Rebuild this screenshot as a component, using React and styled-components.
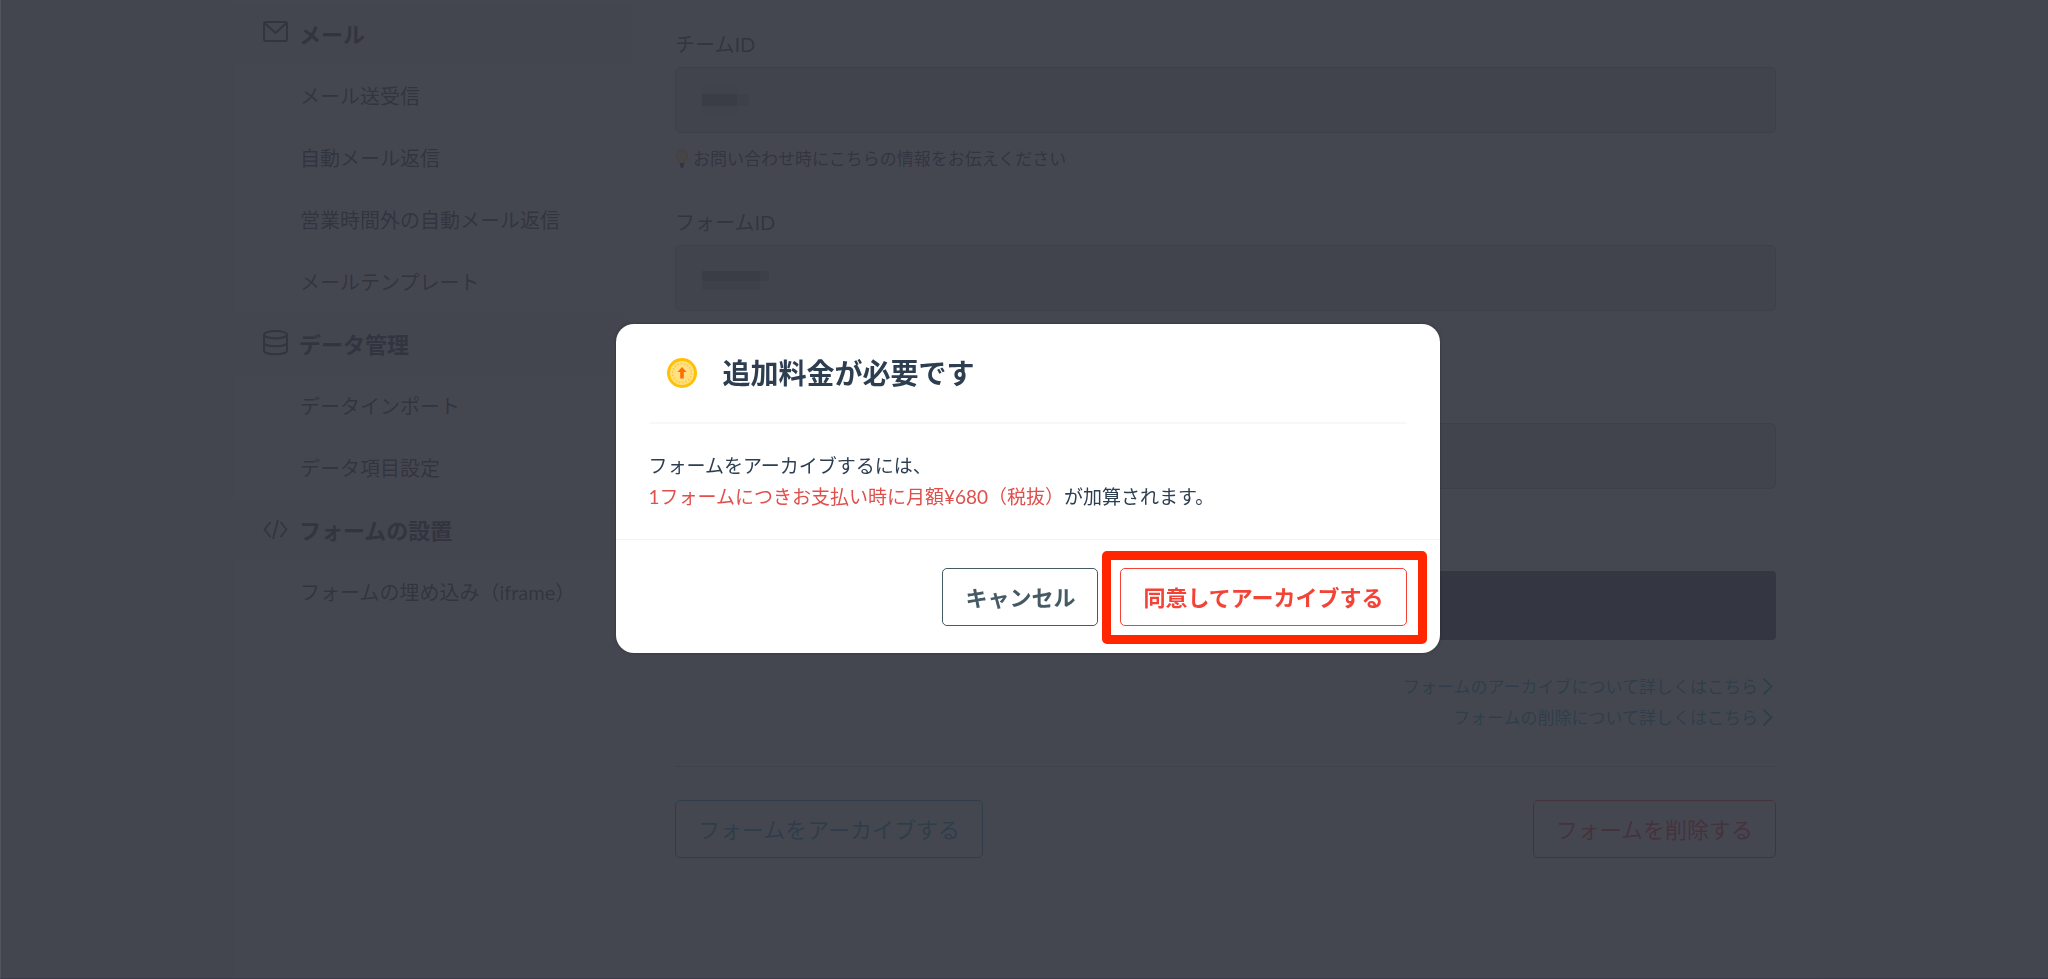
import styled, { createGlobalStyle } from "styled-components";

const GlobalStyle = createGlobalStyle`
  * {
    box-sizing: border-box;
  }
  body {
    margin: 0;
    overflow: hidden;
    background-color: #e2eaec;
    color: #2c3450;
    font-family: Lato, "Noto Sans CJK JP", sans-serif;
    font-size: 20px;
  }
  button,
  input {
    font-family: inherit;
  }
`;

const Page = styled.div`
  min-height: 100vh;
  padding: 0 227px 0 234px;
  display: flex;
`;

const Sidebar = styled.nav`
  flex: 0 0 397px;
  padding-top: 3px;
  background-color: white;
`;

const SectionTitle = styled.h2`
  height: 62px;
  margin: 0;
  padding: 0 0 2px 29px;
  display: flex;
  align-items: center;
  gap: 11px;
  background-color: #e2eaec;
  font-size: 22px;
  font-weight: 700;
`;

const MenuList = styled.ul`
  margin: 0;
  padding: 0;
  list-style: none;
`;

const MenuLink = styled.a`
  height: 62px;
  padding: 0 0 1px 66px;
  display: flex;
  align-items: center;
  color: inherit;
  text-decoration: none;
`;

const Main = styled.main`
  flex: 1;
  padding: 29px 45px 0 44px;
  background-color: white;
`;

const Field = styled.div`
  margin-bottom: ${(props) => props.$space}px;
`;

const Label = styled.label`
  display: block;
  margin-bottom: 8px;
  line-height: 30px;
`;

const InputBox = styled.div`
  position: relative;
`;

const Input = styled.input`
  display: block;
  width: 100%;
  height: 66px;
  padding: 0 26px;
  border: 1px solid #a4a0d0;
  border-radius: 5px;
  background-color: #d4d8dc;
  font-size: 20px;
`;

// masked id value
const Mask = styled.svg`
  position: absolute;
  top: 14px;
  left: 27px;
`;

const Help = styled.p`
  margin: 14px 0 0;
  display: flex;
  align-items: center;
  gap: 4px;
  font-size: 17px;
  line-height: 24px;
`;

const SaveButton = styled.button`
  display: block;
  width: 100%;
  height: 69px;
  border: none;
  border-radius: 4px;
  background-color: #484b68;
`;

const Links = styled.div`
  margin-top: 31px;
  padding-bottom: 33px;
  display: flex;
  flex-direction: column;
  align-items: flex-end;
  border-bottom: 1px solid #bcc2cc;
`;

const HelpLink = styled.a`
  display: flex;
  align-items: center;
  gap: 4px;
  padding-right: 3px;
  color: #089cb8;
  font-size: 17px;
  line-height: 31px;
  text-decoration: none;
`;

const Actions = styled.div`
  margin-top: 33px;
  display: flex;
  justify-content: space-between;
`;

const Button = styled.button`
  height: 58px;
  padding: 0 22px 3px;
  border: 1px solid ${(props) => props.$color};
  border-radius: 5px;
  background-color: transparent;
  color: ${(props) => props.$color};
  font-size: 22px;
  font-weight: ${(props) => (props.$bold ? 700 : 400)};
  white-space: nowrap;
`;

const Overlay = styled.div`
  position: fixed;
  inset: 0;
  padding: 0 0 1px 6px;
  display: flex;
  align-items: center;
  justify-content: center;
  border-left: 1px solid rgba(255, 255, 255, 0.08);
  border-bottom: 1px solid #393b47;
  background-color: rgba(51, 53, 63, 0.91);
`;

const Modal = styled.div`
  width: 824px;
  border-radius: 18px;
  background-color: white;
  box-shadow: 0 0 3px rgba(30, 30, 45, 0.6);
  color: #2c3e50;
`;

const ModalHeader = styled.div`
  margin: 0 33px;
  padding-left: 18px;
  height: 100px;
  display: flex;
  align-items: center;
  gap: 26px;
  border-bottom: 2px solid #f7f8f8;
`;

const ModalTitle = styled.h1`
  margin: 0;
  padding-bottom: 3px;
  font-size: 28px;
  font-weight: 700;
`;

const ModalBody = styled.p`
  margin: 0;
  padding: 26px 33px 27px;
  font-size: 19px;
  line-height: 31px;
`;

const Price = styled.span`
  color: #df4f4c;
`;

const ModalFooter = styled.div`
  padding: 28px 33px 27px;
  display: flex;
  justify-content: flex-end;
  gap: 22px;
  border-top: 1px solid #f2f4f4;
`;

const Agree = styled.div`
  position: relative;
`;

const Highlight = styled.div`
  position: absolute;
  inset: -17px -20px -18px -18px;
  border: 9px solid #ff2600;
  border-radius: 5px;
  pointer-events: none;
`;

const MailIcon = () => (
  <svg width="25" height="24" viewBox="0 0 25 24" fill="none" stroke="currentColor" strokeWidth="2">
    <rect x="1" y="1" width="23" height="19" rx="2" />
    <path d="M1.5 2L12.5 12L23.5 2" />
  </svg>
);

const DataIcon = () => (
  <svg width="25" height="26" viewBox="0 0 25 26" fill="none" stroke="currentColor" strokeWidth="2">
    <ellipse cx="12.5" cy="4.7" rx="11.5" ry="3.7" />
    <path d="M1 4.7v15.8c0 2.2 5 3.7 11.5 3.7S24 22.7 24 20.5V4.7M1 12.5c0 2.2 5 3.7 11.5 3.7S24 14.7 24 12.5" />
  </svg>
);

const CodeIcon = () => (
  <svg width="25" height="24" viewBox="0 0 25 24" fill="none" stroke="currentColor" strokeWidth="1.7">
    <path d="M7.5 5L1.5 12.5L7.5 20M17.5 5L23.5 12.5L17.5 20M15 3L10 22" />
  </svg>
);

const BulbIcon = () => (
  <svg width="14" height="20" viewBox="0 0 14 20">
    <path d="M7 1a5.5 5.5 0 0 0-5.5 5.5C1.5 9.5 4.5 10.5 4.5 14h5c0-3.5 3-4.5 3-7.5A5.5 5.5 0 0 0 7 1z" fill="#fbe5a0" stroke="#e6a020" />
    <path d="M5 14h4v3l-1 2H6l-1-2z" fill="#3c4246" />
  </svg>
);

const Chevron = () => (
  <svg width="11" height="19" viewBox="0 0 11 19" fill="none" stroke="currentColor" strokeWidth="2">
    <path d="M1.5 1.5L9.5 9.5L1.5 17.5" />
  </svg>
);

const CoinIcon = () => (
  <svg width="30" height="30" viewBox="0 0 30 30">
    <circle cx="15" cy="15" r="15" fill="#ffc107" />
    <circle cx="15" cy="15" r="12" fill="#ffe082" />
    <circle cx="15" cy="15" r="9.5" fill="none" stroke="#ffc933" strokeWidth="1.6" strokeDasharray="1.6 1.715" />
    <path d="M15 9l4.500 5h-2.700v6.500h-3.600V14H10.500z" fill="#ff6f00" />
  </svg>
);

const menu = [
  {
    title: "メール",
    icon: <MailIcon />,
    items: [
      "メール送受信",
      "自動メール返信",
      "営業時間外の自動メール返信",
      "メールテンプレート",
    ],
  },
  {
    title: "データ管理",
    icon: <DataIcon />,
    items: ["データインポート", "データ項目設定"],
  },
  {
    title: "フォームの設置",
    icon: <CodeIcon />,
    items: ["フォームの埋め込み（iframe）"],
  },
];

const App = () => {
  return (
    <>
      <GlobalStyle />
      <Page>
        <Sidebar>
          {menu.map((section) => (
            <section key={section.title}>
              <SectionTitle>
                {section.icon}
                {section.title}
              </SectionTitle>
              <MenuList>
                {section.items.map((item) => (
                  <li key={item}>
                    <MenuLink href="#">{item}</MenuLink>
                  </li>
                ))}
              </MenuList>
            </section>
          ))}
        </Sidebar>
        <Main>
          <Field $space={36}>
            <Label htmlFor="team-id">チームID</Label>
            <InputBox>
              <Input id="team-id" readOnly />
              <Mask width="60" height="40" fill="#849093">
                <rect y="2" width="35" height="35" opacity="0.2" />
                <rect y="13" width="35" height="12" />
                <rect x="35" y="13" width="12" height="12" opacity="0.4" />
              </Mask>
            </InputBox>
            <Help>
              <BulbIcon />
              お問い合わせ時にこちらの情報をお伝えください
            </Help>
          </Field>
          <Field $space={112}>
            <Label htmlFor="form-id">フォームID</Label>
            <InputBox>
              <Input id="form-id" readOnly />
              <Mask width="90" height="44" fill="#849093">
                <rect y="12" width="58" height="10" />
                <rect x="58" y="12" width="9" height="10" opacity="0.6" />
                <rect y="22" width="58" height="9" opacity="0.4" />
              </Mask>
            </InputBox>
          </Field>
          <Field $space={82}>
            <Input aria-label="フォーム" readOnly />
          </Field>
          <SaveButton aria-label="保存" />
          <Links>
            <HelpLink href="#">
              フォームのアーカイブについて詳しくはこちら
              <Chevron />
            </HelpLink>
            <HelpLink href="#">
              フォームの削除について詳しくはこちら
              <Chevron />
            </HelpLink>
          </Links>
          <Actions>
            <Button $color="#0890b0">フォームをアーカイブする</Button>
            <Button $color="#f01828">フォームを削除する</Button>
          </Actions>
        </Main>
      </Page>
      <Overlay>
        <Modal role="dialog" aria-labelledby="modal-title">
          <ModalHeader>
            <CoinIcon />
            <ModalTitle id="modal-title">追加料金が必要です</ModalTitle>
          </ModalHeader>
          <ModalBody>
            フォームをアーカイブするには、
            <br />
            <Price>1フォームにつきお支払い時に月額¥680（税抜）</Price>
            が加算されます。
          </ModalBody>
          <ModalFooter>
            <Button $color="#455a64" $bold>
              キャンセル
            </Button>
            <Agree>
              <Button $color="#f44336" $bold>
                同意してアーカイブする
              </Button>
              <Highlight />
            </Agree>
          </ModalFooter>
        </Modal>
      </Overlay>
    </>
  );
};

export default App;
